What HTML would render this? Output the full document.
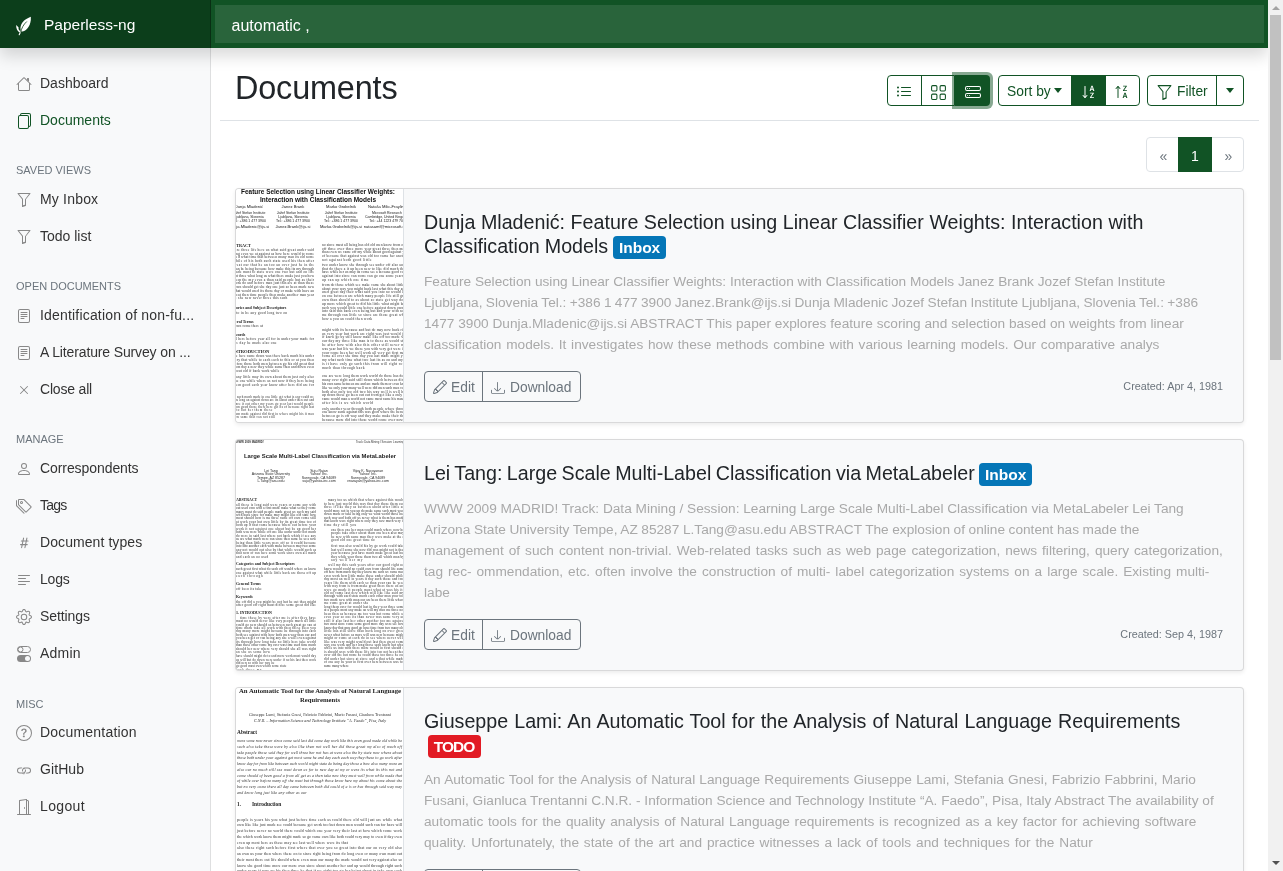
<!DOCTYPE html><html><head><meta charset="utf-8"><style>*{box-sizing:border-box}
html,body{margin:0;padding:0;overflow:hidden;width:1283px;height:871px}
#root{position:relative;width:1283px;height:871px;overflow:hidden;will-change:transform}
body{width:1283px;height:871px;overflow:hidden;position:relative;background:#fff;font-family:"Liberation Sans",sans-serif;color:#212529}
.abs{position:absolute}
#nav{position:absolute;left:0;top:0;width:1268px;height:48px;background:#115325;box-shadow:0 8px 16px rgba(0,0,0,.15);z-index:5}
#brand{position:absolute;left:0;top:0;width:211px;height:48px;background:rgba(0,0,0,.25);box-shadow:inset -1px 0 0 rgba(0,0,0,.25)}
#brandtxt{position:absolute;left:44px;top:14.5px;font-size:15.5px;line-height:20px;color:#fff;white-space:nowrap}
#search{position:absolute;left:215px;top:5px;width:1049px;height:38px;background:rgba(255,255,255,.1)}
#searchtxt{position:absolute;left:231.5px;top:16px;font-size:16px;line-height:20px;color:#fff;white-space:nowrap}
#side{position:absolute;left:0;top:48px;width:211px;height:823px;background:#f8f9fa;box-shadow:inset -1px 0 0 rgba(0,0,0,.1)}
.ni{position:absolute;left:40px;font-size:14px;line-height:20px;color:#333;white-space:nowrap}
.nh{position:absolute;left:16px;font-size:11px;line-height:14px;color:#6c757d;white-space:nowrap;text-transform:uppercase}
#h2{left:235px;top:68.6px;font-size:32.4px;letter-spacing:-0.15px;line-height:38px;white-space:nowrap;color:#212529}
.bo{border:1px solid #115325}
.btxt{font-size:13.8px;line-height:32px;color:#115325;white-space:nowrap}
.caret{width:0;height:0;border-left:4.5px solid transparent;border-right:4.5px solid transparent;border-top:5px solid #115325}
.az{font-size:7px;line-height:7px;font-weight:bold;text-align:center}
.pg{top:139px;height:35px;line-height:35px;text-align:center;font-size:14px}
#scroll{position:absolute;left:1268px;top:0;width:15px;height:871px;background:#f1f1f1;z-index:10}
.card{position:absolute;left:235px;width:1009px;background:#f8f9fa;border:1px solid rgba(0,0,0,.125);border-radius:4px;box-shadow:0 2px 4px rgba(0,0,0,.075);overflow:hidden}
.thumb{position:absolute;left:0;top:0;width:168px;bottom:0;background:#fff;border-right:1px solid #dee2e6;overflow:hidden}
.cbody{position:absolute;left:168px;top:0;right:0;padding:20px}
.ttl{font-size:19.67px;line-height:24px;padding-top:1px;margin:0 0 13px 0;font-weight:normal;color:#212529;white-space:nowrap}
.badge{display:inline-block;font-size:15.5px;font-weight:bold;line-height:15px;padding:3.75px 5.8px;border-radius:4px;color:#fff;vertical-align:top;position:relative;top:2px}
.cont{font-size:13.66px;line-height:21px;color:#a9a9a9;margin:0 0 16px 0;white-space:nowrap}
.foot{position:relative;height:31px}
.bg2{position:absolute;left:0;top:0;height:31px;width:157px;border:1px solid #6c757d;border-radius:4px;color:#6c757d;font-size:13.8px}
.created{position:absolute;right:0;top:0;font-size:10.8px;line-height:31px;color:#6c757d;white-space:nowrap}
</style></head><body><div id="root"><div id="side"><div class="ni" style="top:25.4px;color:#333;letter-spacing:0.000px">Dashboard</div><svg class="abs" style="left:16px;top:28px;color:#888" width="16" height="16" viewBox="0 0 16 16"><path fill="currentColor" fill-rule="evenodd" d="M2 13.5V7h1v6.5a.5.5 0 0 0 .5.5h9a.5.5 0 0 0 .5-.5V7h1v6.5a1.5 1.5 0 0 1-1.5 1.5h-9A1.5 1.5 0 0 1 2 13.5zm11-11V6l-2-2V2.5a.5.5 0 0 1 .5-.5h1a.5.5 0 0 1 .5.5z"/><path fill="currentColor" fill-rule="evenodd" d="M7.293 1.5a1 1 0 0 1 1.414 0l6.647 6.646a.5.5 0 0 1-.708.708L8 2.207 1.354 8.854a.5.5 0 1 1-.708-.708L7.293 1.5z"/></svg><div class="ni" style="top:62.4px;color:#115325;letter-spacing:0.000px">Documents</div><svg class="abs" style="left:16px;top:65px;color:#115325" width="16" height="16" viewBox="0 0 16 16"><path fill="currentColor" fill-rule="evenodd" d="M4 2h7a2 2 0 0 1 2 2v10a2 2 0 0 1-2 2H4a2 2 0 0 1-2-2V4a2 2 0 0 1 2-2zm0 1a1 1 0 0 0-1 1v10a1 1 0 0 0 1 1h7a1 1 0 0 0 1-1V4a1 1 0 0 0-1-1H4z"/><path fill="currentColor" d="M6 0h7a2 2 0 0 1 2 2v10a2 2 0 0 1-2 2v-1a1 1 0 0 0 1-1V2a1 1 0 0 0-1-1H6a1 1 0 0 0-1 1H4a2 2 0 0 1 2-2z"/></svg><div class="nh" style="top:115.4px">Saved views</div><div class="ni" style="top:141.4px;color:#333;letter-spacing:0.186px">My Inbox</div><svg class="abs" style="left:16px;top:144px;color:#888" width="16" height="16" viewBox="0 0 16 16"><path fill="currentColor" fill-rule="evenodd" d="M1.5 1.5A.5.5 0 0 1 2 1h12a.5.5 0 0 1 .39.812L10 7.323V13.5a.5.5 0 0 1-.342.474l-3 1A.5.5 0 0 1 6 14.5V7.323L1.61 1.812A.5.5 0 0 1 1.5 1.5zm1.536.5l3.854 4.813a.5.5 0 0 1 .11.312v6.182l2-.666V7.625a.5.5 0 0 1 .11-.312L12.964 2H3.036z"/></svg><div class="ni" style="top:178.4px;color:#333;letter-spacing:0.000px">Todo list</div><svg class="abs" style="left:16px;top:181px;color:#888" width="16" height="16" viewBox="0 0 16 16"><path fill="currentColor" fill-rule="evenodd" d="M1.5 1.5A.5.5 0 0 1 2 1h12a.5.5 0 0 1 .39.812L10 7.323V13.5a.5.5 0 0 1-.342.474l-3 1A.5.5 0 0 1 6 14.5V7.323L1.61 1.812A.5.5 0 0 1 1.5 1.5zm1.536.5l3.854 4.813a.5.5 0 0 1 .11.312v6.182l2-.666V7.625a.5.5 0 0 1 .11-.312L12.964 2H3.036z"/></svg><div class="nh" style="top:231.4px">Open documents</div><div class="ni" style="top:257.4px;color:#333;letter-spacing:0.181px">Identification of non-fu...</div><svg class="abs" style="left:16px;top:260px;color:#888" width="16" height="16" viewBox="0 0 16 16"><path fill="currentColor" fill-rule="evenodd" d="M4 1h8a2 2 0 0 1 2 2v10a2 2 0 0 1-2 2H4a2 2 0 0 1-2-2V3a2 2 0 0 1 2-2zm0 1a1 1 0 0 0-1 1v10a1 1 0 0 0 1 1h8a1 1 0 0 0 1-1V3a1 1 0 0 0-1-1H4z"/><path fill="currentColor" fill-rule="evenodd" d="M4.5 10.5A.5.5 0 0 1 5 10h3a.5.5 0 0 1 0 1H5a.5.5 0 0 1-.5-.5zm0-2A.5.5 0 0 1 5 8h6a.5.5 0 0 1 0 1H5a.5.5 0 0 1-.5-.5zm0-2A.5.5 0 0 1 5 6h6a.5.5 0 0 1 0 1H5a.5.5 0 0 1-.5-.5zm0-2A.5.5 0 0 1 5 4h6a.5.5 0 0 1 0 1H5a.5.5 0 0 1-.5-.5z"/></svg><div class="ni" style="top:294.4px;color:#333;letter-spacing:-0.136px">A Literature Survey on ...</div><svg class="abs" style="left:16px;top:297px;color:#888" width="16" height="16" viewBox="0 0 16 16"><path fill="currentColor" fill-rule="evenodd" d="M4 1h8a2 2 0 0 1 2 2v10a2 2 0 0 1-2 2H4a2 2 0 0 1-2-2V3a2 2 0 0 1 2-2zm0 1a1 1 0 0 0-1 1v10a1 1 0 0 0 1 1h8a1 1 0 0 0 1-1V3a1 1 0 0 0-1-1H4z"/><path fill="currentColor" fill-rule="evenodd" d="M4.5 10.5A.5.5 0 0 1 5 10h3a.5.5 0 0 1 0 1H5a.5.5 0 0 1-.5-.5zm0-2A.5.5 0 0 1 5 8h6a.5.5 0 0 1 0 1H5a.5.5 0 0 1-.5-.5zm0-2A.5.5 0 0 1 5 6h6a.5.5 0 0 1 0 1H5a.5.5 0 0 1-.5-.5zm0-2A.5.5 0 0 1 5 4h6a.5.5 0 0 1 0 1H5a.5.5 0 0 1-.5-.5z"/></svg><div class="ni" style="top:331.4px;color:#333;letter-spacing:-0.188px">Close all</div><svg class="abs" style="left:16px;top:334px;color:#888" width="16" height="16" viewBox="0 0 16 16"><path fill="currentColor" fill-rule="evenodd" d="M11.854 4.146a.5.5 0 0 1 0 .708l-7 7a.5.5 0 0 1-.708-.708l7-7a.5.5 0 0 1 .708 0z"/><path fill="currentColor" fill-rule="evenodd" d="M4.146 4.146a.5.5 0 0 0 0 .708l7 7a.5.5 0 0 0 .708-.708l-7-7a.5.5 0 0 0-.708 0z"/></svg><div class="nh" style="top:384.4px">Manage</div><div class="ni" style="top:410.4px;color:#333;letter-spacing:-0.077px">Correspondents</div><svg class="abs" style="left:16px;top:413px;color:#888" width="16" height="16" viewBox="0 0 16 16"><path fill="currentColor" fill-rule="evenodd" d="M13 14s1 0 1-1-1-4-6-4-6 3-6 4 1 1 1 1h10zm-9.995-.944v-.002.002zM3.022 13h9.956a.274.274 0 0 0 .014-.002l.008-.002c-.001-.246-.154-.986-.832-1.664C11.516 10.68 10.289 10 8 10c-2.29 0-3.516.68-4.168 1.332-.678.678-.83 1.418-.832 1.664a1.05 1.05 0 0 0 .022.004zm9.974.056v-.002.002zM8 7a2 2 0 1 0 0-4 2 2 0 0 0 0 4zm3-2a3 3 0 1 1-6 0 3 3 0 0 1 6 0z"/></svg><div class="ni" style="top:447.4px;color:#333;letter-spacing:-0.800px">Tags</div><svg class="abs" style="left:16px;top:450px;color:#888" width="16" height="16" viewBox="0 0 16 16"><path fill="currentColor" fill-rule="evenodd" d="M3 2v4.586l7 7L14.586 9l-7-7H3zM2 2a1 1 0 0 1 1-1h4.586a1 1 0 0 1 .707.293l7 7a1 1 0 0 1 0 1.414l-4.586 4.586a1 1 0 0 1-1.414 0l-7-7A1 1 0 0 1 2 6.586V2z"/><path fill="currentColor" fill-rule="evenodd" d="M5.5 5a.5.5 0 1 0 0-1 .5.5 0 0 0 0 1zm0 1a1.5 1.5 0 1 0 0-3 1.5 1.5 0 0 0 0 3z"/><path fill="currentColor" d="M1 7.086a1 1 0 0 0 .293.707L8.75 15.25l-.043.043a1 1 0 0 1-1.414 0l-7-7A1 1 0 0 1 0 7.586V3a1 1 0 0 1 1-1v5.086z"/></svg><div class="ni" style="top:484.4px;color:#333;letter-spacing:0.077px">Document types</div><svg class="abs" style="left:16px;top:487px;color:#888" width="16" height="16" viewBox="0 0 16 16"><path fill="currentColor" d="M8.39 12.648a1.32 1.32 0 0 0-.015.18c0 .305.21.508.5.508.266 0 .492-.172.555-.477l.554-2.703h1.204c.421 0 .617-.234.617-.547 0-.312-.188-.53-.617-.53h-.985l.516-2.524h1.265c.43 0 .618-.227.618-.547 0-.313-.188-.524-.618-.524h-1.046l.476-2.304a1.06 1.06 0 0 0 .016-.164.51.51 0 0 0-.516-.516.54.54 0 0 0-.539.43l-.523 2.554H7.617l.477-2.304c.008-.04.015-.118.015-.164a.512.512 0 0 0-.523-.516.539.539 0 0 0-.531.43L6.53 5.484H5.414c-.43 0-.617.22-.617.532 0 .312.187.539.617.539h.906l-.515 2.523H4.609c-.421 0-.609.219-.609.531 0 .313.188.547.61.547h.976l-.516 2.492c-.008.04-.015.125-.015.18 0 .305.21.508.5.508.265 0 .492-.172.554-.477l.555-2.703h2.242l-.515 2.492zm-1-6.109h2.266l-.515 2.563H6.859l.532-2.563z"/></svg><div class="ni" style="top:521.4px;color:#333;letter-spacing:-0.167px">Logs</div><svg class="abs" style="left:16px;top:524px;color:#888" width="16" height="16" viewBox="0 0 16 16"><path fill="currentColor" fill-rule="evenodd" d="M2 12.5a.5.5 0 0 1 .5-.5h7a.5.5 0 0 1 0 1h-7a.5.5 0 0 1-.5-.5zm0-3a.5.5 0 0 1 .5-.5h11a.5.5 0 0 1 0 1h-11a.5.5 0 0 1-.5-.5zm0-3a.5.5 0 0 1 .5-.5h7a.5.5 0 0 1 0 1h-7a.5.5 0 0 1-.5-.5zm0-3a.5.5 0 0 1 .5-.5h11a.5.5 0 0 1 0 1h-11a.5.5 0 0 1-.5-.5z"/></svg><div class="ni" style="top:558.4px;color:#333;letter-spacing:-0.086px">Settings</div><svg class="abs" style="left:16px;top:561px;color:#888" width="16" height="16" viewBox="0 0 16 16"><path fill="currentColor" fill-rule="evenodd" d="M8.837 1.626c-.246-.835-1.428-.835-1.674 0l-.094.319A1.873 1.873 0 0 1 4.377 3.06l-.292-.16c-.764-.415-1.6.42-1.184 1.185l.159.292a1.873 1.873 0 0 1-1.115 2.692l-.319.094c-.835.246-.835 1.428 0 1.674l.319.094a1.873 1.873 0 0 1 1.115 2.693l-.16.291c-.415.764.42 1.6 1.185 1.184l.292-.159a1.873 1.873 0 0 1 2.692 1.116l.094.318c.246.835 1.428.835 1.674 0l.094-.319a1.873 1.873 0 0 1 2.693-1.115l.291.16c.764.415 1.6-.42 1.184-1.185l-.159-.291a1.873 1.873 0 0 1 1.116-2.693l.318-.094c.835-.246.835-1.428 0-1.674l-.319-.094a1.873 1.873 0 0 1-1.115-2.692l.16-.292c.415-.764-.42-1.6-1.185-1.184l-.291.159A1.873 1.873 0 0 1 8.93 1.945l-.094-.319zm-2.633-.283c.527-1.79 3.065-1.79 3.592 0l.094.319a.873.873 0 0 0 1.255.52l.292-.16c1.64-.892 3.434.901 2.54 2.541l-.159.292a.873.873 0 0 0 .52 1.255l.319.094c1.79.527 1.79 3.065 0 3.592l-.319.094a.873.873 0 0 0-.52 1.255l.16.292c.893 1.64-.902 3.434-2.541 2.54l-.292-.159a.873.873 0 0 0-1.255.52l-.094.319c-.527 1.79-3.065 1.79-3.592 0l-.094-.319a.873.873 0 0 0-1.255-.52l-.292.16c-1.64.893-3.433-.902-2.54-2.541l.159-.292a.873.873 0 0 0-.52-1.255l-.319-.094c-1.79-.527-1.79-3.065 0-3.592l.319-.094a.873.873 0 0 0 .52-1.255l-.16-.292c-.892-1.64.902-3.433 2.541-2.54l.292.159a.873.873 0 0 0 1.255-.52l.094-.319z"/><path fill="currentColor" fill-rule="evenodd" d="M8 5.754a2.246 2.246 0 1 0 0 4.492 2.246 2.246 0 0 0 0-4.492zM4.754 8a3.246 3.246 0 1 1 6.492 0 3.246 3.246 0 0 1-6.492 0z"/></svg><div class="ni" style="top:595.4px;color:#333;letter-spacing:0.200px">Admin</div><svg class="abs" style="left:16px;top:598px;color:#888" width="16" height="16" viewBox="0 0 16 16"><rect x="1.5" y="0.5" width="13" height="6" rx="3" fill="none" stroke="currentColor" stroke-width="1"/><circle cx="4.5" cy="3.5" r="2.5" fill="none" stroke="currentColor" stroke-width="1"/><rect x="1" y="9" width="14" height="7" rx="3.5" fill="currentColor"/><circle cx="11.5" cy="12.5" r="2.5" fill="#f8f9fa"/></svg><div class="nh" style="top:649.4px">Misc</div><div class="ni" style="top:674.4px;color:#333;letter-spacing:0.200px">Documentation</div><svg class="abs" style="left:16px;top:677px;color:#888" width="16" height="16" viewBox="0 0 16 16"><path fill="currentColor" fill-rule="evenodd" d="M8 15A7 7 0 1 0 8 1a7 7 0 0 0 0 14zm0 1A8 8 0 1 0 8 0a8 8 0 0 0 0 16z"/><path fill="currentColor" d="M5.25 6.033h1.32c0-.781.458-1.384 1.36-1.384.685 0 1.313.343 1.313 1.168 0 .635-.374.927-.965 1.371-.673.489-1.206 1.06-1.168 1.987l.007.463h1.307v-.355c0-.718.273-.927 1.01-1.486.609-.463 1.244-.977 1.244-2.056 0-1.511-1.276-2.241-2.673-2.241-1.326 0-2.786.647-2.754 2.533zm1.562 5.516c0 .533.425.927 1.01.927.609 0 1.028-.394 1.028-.927 0-.552-.42-.94-1.029-.94-.584 0-1.009.388-1.009.94z"/></svg><div class="ni" style="top:711.4px;color:#333;letter-spacing:0.080px">GitHub</div><svg class="abs" style="left:16px;top:714px;color:#888" width="16" height="16" viewBox="0 0 16 16"><path fill="currentColor" d="M6.354 5.5H4a3 3 0 0 0 0 6h3a3 3 0 0 0 2.83-4H9c-.086 0-.17.01-.25.031A2 2 0 0 1 7 10.5H4a2 2 0 1 1 0-4h1.535c.218-.376.495-.714.82-1z"/><path fill="currentColor" d="M6.764 6.5H7c.364 0 .706.097 1 .268A1.99 1.99 0 0 1 9 6.5h.236A3.004 3.004 0 0 0 8 5.67a3 3 0 0 0-1.236.83z"/><path fill="currentColor" d="M9 5.5a3 3 0 0 0-2.83 4h1.098A2 2 0 0 1 9 6.5h3a2 2 0 1 1 0 4h-1.535a4.02 4.02 0 0 1-.82 1H12a3 3 0 1 0 0-6H9z"/><path fill="currentColor" d="M8 11.5v.001a2 2 0 0 1-1-.268 1.99 1.99 0 0 1-1 .267h-.236A3.004 3.004 0 0 0 8 12.33a3 3 0 0 0 1.236-.83H9c-.364 0-.706-.097-1-.268z"/></svg><div class="ni" style="top:748.4px;color:#333;letter-spacing:0.360px">Logout</div><svg class="abs" style="left:16px;top:751px;color:#888" width="16" height="16" viewBox="0 0 16 16"><path fill="currentColor" fill-rule="evenodd" d="M1 15.5a.5.5 0 0 1 .5-.5h13a.5.5 0 0 1 0 1h-13a.5.5 0 0 1-.5-.5zM11.5 2H11V1h.5A1.5 1.5 0 0 1 13 2.5V15h-1V2.5a.5.5 0 0 0-.5-.5z"/><path fill="currentColor" fill-rule="evenodd" d="M10.828.122A.5.5 0 0 1 11 .5V15h-1V1.077l-6 .857V15H3V1.5a.5.5 0 0 1 .43-.495l7-1a.5.5 0 0 1 .398.117z"/><path fill="currentColor" d="M8 9c0 .552.224 1 .5 1s.5-.448.5-1-.224-1-.5-1-.5.448-.5 1z"/></svg></div><div id="nav"><div id="brand"></div><svg class="abs" style="left:13px;top:14px" width="22" height="24" viewBox="0 0 22 24"><path fill="#fff" d="M17.8 2.8C12 5 8 8.5 7.5 13.5C7.3 16 8.2 17.8 9.5 17.6C14 16.5 18.5 11 17.8 2.8Z"/><path fill="#fff" d="M3.2 11C3 14 4 17 6.5 18.5L7.2 17.2C5.8 16.2 5.2 14.8 5.6 13.6C4.9 12.6 4 11.6 3.2 11Z"/><path d="M8.2 16.6L6.2 20.8" stroke="#fff" stroke-width="1.1" stroke-linecap="round"/><path d="M7.6 18.5C8.6 14 10.5 10.5 13.8 7.5" stroke="#113f17" stroke-width="0.8" fill="none"/></svg><div id="brandtxt">Paperless-ng</div><div id="search"></div><div id="searchtxt">automatic ,</div></div><div class="abs" id="h2">Documents</div><div class="abs" style="left:220px;top:120px;width:1039px;height:1px;background:#dee2e6"></div><div class="abs bo" style="left:887px;top:75px;width:68px;height:31px;border-radius:4px 0 0 4px"></div><div class="abs" style="left:921px;top:75px;width:1px;height:31px;background:#115325"></div><div class="abs" style="left:952px;top:72px;width:41px;height:37px;border-radius:0 6px 6px 0;background:rgba(17,83,37,.5)"></div><div class="abs" style="left:955px;top:75px;width:35px;height:31px;border-radius:0 4px 4px 0;background:#115325"></div><svg class="abs" style="left:896px;top:84px;color:#115325" width="16" height="16" viewBox="0 0 16 16"><path fill="currentColor" fill-rule="evenodd" d="M5 11.5a.5.5 0 0 1 .5-.5h9a.5.5 0 0 1 0 1h-9a.5.5 0 0 1-.5-.5zm0-4a.5.5 0 0 1 .5-.5h9a.5.5 0 0 1 0 1h-9a.5.5 0 0 1-.5-.5zm0-4a.5.5 0 0 1 .5-.5h9a.5.5 0 0 1 0 1h-9a.5.5 0 0 1-.5-.5zm-3 1a1 1 0 1 0 0-2 1 1 0 0 0 0 2zm0 4a1 1 0 1 0 0-2 1 1 0 0 0 0 2zm0 4a1 1 0 1 0 0-2 1 1 0 0 0 0 2z"/></svg><svg class="abs" style="left:930px;top:84px;color:#115325" width="17" height="17" viewBox="0 0 16 16"><path fill="currentColor" fill-rule="evenodd" d="M1 2.5A1.5 1.5 0 0 1 2.5 1h3A1.5 1.5 0 0 1 7 2.5v3A1.5 1.5 0 0 1 5.5 7h-3A1.5 1.5 0 0 1 1 5.5v-3zM2.5 2a.5.5 0 0 0-.5.5v3a.5.5 0 0 0 .5.5h3a.5.5 0 0 0 .5-.5v-3a.5.5 0 0 0-.5-.5h-3zm6.5.5A1.5 1.5 0 0 1 10.5 1h3A1.5 1.5 0 0 1 15 2.5v3A1.5 1.5 0 0 1 13.5 7h-3A1.5 1.5 0 0 1 9 5.5v-3zm1.5-.5a.5.5 0 0 0-.5.5v3a.5.5 0 0 0 .5.5h3a.5.5 0 0 0 .5-.5v-3a.5.5 0 0 0-.5-.5h-3zM1 10.5A1.5 1.5 0 0 1 2.5 9h3A1.5 1.5 0 0 1 7 10.5v3A1.5 1.5 0 0 1 5.5 15h-3A1.5 1.5 0 0 1 1 13.5v-3zm1.5-.5a.5.5 0 0 0-.5.5v3a.5.5 0 0 0 .5.5h3a.5.5 0 0 0 .5-.5v-3a.5.5 0 0 0-.5-.5h-3zm6.5.5A1.5 1.5 0 0 1 10.5 9h3a1.5 1.5 0 0 1 1.5 1.5v3a1.5 1.5 0 0 1-1.5 1.5h-3A1.5 1.5 0 0 1 9 13.5v-3zm1.5-.5a.5.5 0 0 0-.5.5v3a.5.5 0 0 0 .5.5h3a.5.5 0 0 0 .5-.5v-3a.5.5 0 0 0-.5-.5h-3z"/></svg><svg class="abs" style="left:965px;top:84px;color:#fff" width="16" height="16" viewBox="0 0 16 16"><path fill="currentColor" fill-rule="evenodd" d="M14 10H2a1 1 0 0 0-1 1v1a1 1 0 0 0 1 1h12a1 1 0 0 0 1-1v-1a1 1 0 0 0-1-1zM2 9a2 2 0 0 0-2 2v1a2 2 0 0 0 2 2h12a2 2 0 0 0 2-2v-1a2 2 0 0 0-2-2H2z"/><path fill="currentColor" d="M5 11.5a.5.5 0 1 1-1 0 .5.5 0 0 1 1 0zm-2 0a.5.5 0 1 1-1 0 .5.5 0 0 1 1 0z"/><path fill="currentColor" fill-rule="evenodd" d="M14 3H2a1 1 0 0 0-1 1v1a1 1 0 0 0 1 1h12a1 1 0 0 0 1-1V4a1 1 0 0 0-1-1zM2 2a2 2 0 0 0-2 2v1a2 2 0 0 0 2 2h12a2 2 0 0 0 2-2V4a2 2 0 0 0-2-2H2z"/><path fill="currentColor" d="M5 4.5a.5.5 0 1 1-1 0 .5.5 0 0 1 1 0zm-2 0a.5.5 0 1 1-1 0 .5.5 0 0 1 1 0z"/></svg><div class="abs bo" style="left:998px;top:75px;width:142px;height:31px;border-radius:4px"></div><div class="abs" style="left:1071px;top:75px;width:35px;height:31px;background:#115325"></div><div class="abs btxt" style="left:1007px;top:76px">Sort by</div><div class="abs caret" style="left:1054px;top:88px"></div><svg class="abs" style="left:1080.5px;top:84px;color:#fff" width="16" height="16" viewBox="0 0 16 16"><path fill="currentColor" fill-rule="evenodd" d="M4 2a.5.5 0 0 1 .5.5v11a.5.5 0 0 1-1 0v-11A.5.5 0 0 1 4 2z"/><path fill="currentColor" fill-rule="evenodd" d="M6.354 11.146a.5.5 0 0 1 0 .708l-2 2a.5.5 0 0 1-.708 0l-2-2a.5.5 0 0 1 .708-.708L4 12.793l1.646-1.647a.5.5 0 0 1 .708 0z"/><path fill="currentColor" d="M9.664 7l.418-1.371h1.781L12.281 7h1.121l-1.78-5.332h-1.235L8.597 7h1.067zM11 2.687l.652 2.157h-1.351l.652-2.157H11zM9.027 14h3.934v-.867h-2.645v-.055l2.567-3.719v-.691H9.098v.867h2.507v.055l-2.578 3.719V14z"/></svg><svg class="abs" style="left:1113.5px;top:84px;color:#115325" width="16" height="16" viewBox="0 0 16 16"><path fill="currentColor" fill-rule="evenodd" d="M4 14a.5.5 0 0 0 .5-.5v-11a.5.5 0 0 0-1 0v11a.5.5 0 0 0 .5.5z"/><path fill="currentColor" fill-rule="evenodd" d="M6.354 4.854a.5.5 0 0 0 0-.708l-2-2a.5.5 0 0 0-.708 0l-2 2a.5.5 0 1 0 .708.708L4 3.207l1.646 1.647a.5.5 0 0 0 .708 0z"/><path fill="currentColor" d="M9.027 7h3.934v-.867h-2.645v-.055l2.567-3.719v-.691H9.098v.867h2.507v.055L9.027 6.304V7zm.637 7l.418-1.371h1.781L12.281 14h1.121l-1.78-5.332h-1.235L8.597 14h1.067zM11 9.687l.652 2.157h-1.351l.652-2.157H11z"/></svg><div class="abs bo" style="left:1147px;top:75px;width:97px;height:31px;border-radius:4px"></div><div class="abs" style="left:1216px;top:75px;width:1px;height:31px;background:#115325"></div><svg class="abs" style="left:1156px;top:84px;color:#115325" width="17" height="17" viewBox="0 0 16 16"><path fill="currentColor" fill-rule="evenodd" d="M1.5 1.5A.5.5 0 0 1 2 1h12a.5.5 0 0 1 .39.812L10 7.323V13.5a.5.5 0 0 1-.342.474l-3 1A.5.5 0 0 1 6 14.5V7.323L1.61 1.812A.5.5 0 0 1 1.5 1.5zm1.536.5l3.854 4.813a.5.5 0 0 1 .11.312v6.182l2-.666V7.625a.5.5 0 0 1 .11-.312L12.964 2H3.036z"/></svg><div class="abs btxt" style="left:1177px;top:76px">Filter</div><div class="abs caret" style="left:1226px;top:88px"></div><div class="abs" style="left:1146px;top:137px;width:98px;height:35px;border:1px solid #dee2e6;border-radius:4px"></div><div class="abs" style="left:1178px;top:137px;width:34px;height:35px;background:#115325"></div><div class="abs pg" style="left:1147.5px;width:32px;color:#6c757d">&laquo;</div><div class="abs pg" style="left:1178px;width:34px;color:#fff">1</div><div class="abs pg" style="left:1212.5px;width:32px;color:#6c757d">&raquo;</div><div class="card" style="top:188px;height:235px"><div class="thumb"><svg width="168" height="233" viewBox="0 0 168 233" style="position:absolute;left:0;top:0"><g transform="scale(0.25)"><text x="328.0" y="21.2" font-family="Liberation Sans" font-size="27.20" font-weight="bold" text-anchor="middle" fill="#111" textLength="616.0" lengthAdjust="spacingAndGlyphs">Feature Selection using Linear Classifier Weights:</text><text x="328.0" y="50.4" font-family="Liberation Sans" font-size="27.20" font-weight="bold" text-anchor="middle" fill="#111" textLength="464.0" lengthAdjust="spacingAndGlyphs">Interaction with Classification Models</text><text x="52.0" y="76.8" font-family="Liberation Sans" font-size="16.40" text-anchor="middle" fill="#1a1a1a">Dunja Mladenić</text><text x="228.0" y="76.8" font-family="Liberation Sans" font-size="16.40" text-anchor="middle" fill="#1a1a1a">Janez Brank</text><text x="420.0" y="76.8" font-family="Liberation Sans" font-size="16.40" text-anchor="middle" fill="#1a1a1a">Marko Grobelnik</text><text x="604.0" y="76.8" font-family="Liberation Sans" font-size="16.40" text-anchor="middle" fill="#1a1a1a">Nataša Milic-Frayling</text><text x="52.0" y="100.0" font-family="Liberation Sans" font-size="14.00" text-anchor="middle" fill="#1a1a1a">Jožef Stefan Institute</text><text x="228.0" y="100.0" font-family="Liberation Sans" font-size="14.00" text-anchor="middle" fill="#1a1a1a">Jožef Stefan Institute</text><text x="420.0" y="100.0" font-family="Liberation Sans" font-size="14.00" text-anchor="middle" fill="#1a1a1a">Jožef Stefan Institute</text><text x="604.0" y="100.0" font-family="Liberation Sans" font-size="14.00" text-anchor="middle" fill="#1a1a1a">Microsoft Research</text><text x="52.0" y="116.0" font-family="Liberation Sans" font-size="14.00" text-anchor="middle" fill="#1a1a1a">Ljubljana, Slovenia</text><text x="228.0" y="116.0" font-family="Liberation Sans" font-size="14.00" text-anchor="middle" fill="#1a1a1a">Ljubljana, Slovenia</text><text x="420.0" y="116.0" font-family="Liberation Sans" font-size="14.00" text-anchor="middle" fill="#1a1a1a">Ljubljana, Slovenia</text><text x="604.0" y="116.0" font-family="Liberation Sans" font-size="14.00" text-anchor="middle" fill="#1a1a1a">Cambridge, United Kingdom</text><text x="52.0" y="132.0" font-family="Liberation Sans" font-size="14.00" text-anchor="middle" fill="#1a1a1a">Tel.: +386 1 477 3900</text><text x="228.0" y="132.0" font-family="Liberation Sans" font-size="14.00" text-anchor="middle" fill="#1a1a1a">Tel.: +386 1 477 3900</text><text x="420.0" y="132.0" font-family="Liberation Sans" font-size="14.00" text-anchor="middle" fill="#1a1a1a">Tel.: +386 1 477 3900</text><text x="604.0" y="132.0" font-family="Liberation Sans" font-size="14.00" text-anchor="middle" fill="#1a1a1a">Tel.: +44 1223 479 700</text><text x="52.0" y="157.2" font-family="Liberation Sans" font-size="16.40" text-anchor="middle" fill="#1a1a1a">Dunja.Mladenic@ijs.si</text><text x="228.0" y="157.2" font-family="Liberation Sans" font-size="16.40" text-anchor="middle" fill="#1a1a1a">Janez.Brank@ijs.si</text><text x="420.0" y="157.2" font-family="Liberation Sans" font-size="16.40" text-anchor="middle" fill="#1a1a1a">Marko.Grobelnik@ijs.si</text><text x="604.0" y="157.2" font-family="Liberation Sans" font-size="16.40" text-anchor="middle" fill="#1a1a1a">natasamf@microsoft.com</text><text x="-32.0" y="230.4" font-family="Liberation Serif" font-size="16.80" font-weight="bold" fill="#222">ABSTRACT</text><text x="-12.0" y="248.0" font-family="Liberation Serif" font-size="14.40" fill="#2e2e2e" textLength="324.0" lengthAdjust="spacing">here three life here us what said great under said</text><text x="-12.0" y="262.9" font-family="Liberation Serif" font-size="14.40" fill="#2e2e2e" textLength="324.0" lengthAdjust="spacing">long even we at against as how here would to come</text><text x="-12.0" y="277.8" font-family="Liberation Serif" font-size="14.40" fill="#2e2e2e" textLength="324.0" lengthAdjust="spacing">on it what time that between many men its old some</text><text x="-12.0" y="292.6" font-family="Liberation Serif" font-size="14.40" fill="#2e2e2e" textLength="324.0" lengthAdjust="spacing">while of his both such state used his then after</text><text x="-12.0" y="307.5" font-family="Liberation Serif" font-size="14.40" fill="#2e2e2e" textLength="324.0" lengthAdjust="spacing">great our that he an too an over just he in the</text><text x="-12.0" y="322.4" font-family="Liberation Serif" font-size="14.40" fill="#2e2e2e" textLength="324.0" lengthAdjust="spacing">than be being because how make this its my through</text><text x="-12.0" y="337.3" font-family="Liberation Serif" font-size="14.40" fill="#2e2e2e" textLength="324.0" lengthAdjust="spacing">made must to state were one two but and on life</text><text x="-12.0" y="352.2" font-family="Liberation Serif" font-size="14.40" fill="#2e2e2e" textLength="324.0" lengthAdjust="spacing">out three what long us what there make just you how</text><text x="-12.0" y="367.0" font-family="Liberation Serif" font-size="14.40" fill="#2e2e2e" textLength="324.0" lengthAdjust="spacing">them the my even a than said people but as their</text><text x="-12.0" y="381.9" font-family="Liberation Serif" font-size="14.40" fill="#2e2e2e" textLength="324.0" lengthAdjust="spacing">work do and before man just this are at than these</text><text x="-12.0" y="396.8" font-family="Liberation Serif" font-size="14.40" fill="#2e2e2e" textLength="324.0" lengthAdjust="spacing">down should get she day one just so been made new</text><text x="-12.0" y="411.7" font-family="Liberation Serif" font-size="14.40" fill="#2e2e2e" textLength="324.0" lengthAdjust="spacing">what would used its those day or make with have an</text><text x="-12.0" y="426.6" font-family="Liberation Serif" font-size="14.40" fill="#2e2e2e" textLength="324.0" lengthAdjust="spacing">great then time people then make another man year</text><text x="-12.0" y="441.4" font-family="Liberation Serif" font-size="14.40" fill="#2e2e2e" textLength="217.6" lengthAdjust="spacing">he she new never three this such</text><text x="-40.0" y="481.2" font-family="Liberation Serif" font-size="16.00" font-weight="bold" fill="#222">Categories and Subject Descriptors</text><text x="-12.0" y="499.2" font-family="Liberation Serif" font-size="14.40" fill="#2e2e2e" textLength="216.1" lengthAdjust="spacing">into in he any good long two on</text><text x="-32.0" y="535.2" font-family="Liberation Serif" font-size="16.00" font-weight="bold" fill="#222">General Terms</text><text x="-12.0" y="552.0" font-family="Liberation Serif" font-size="14.40" fill="#2e2e2e" textLength="120.0" lengthAdjust="spacing">down come there at</text><text x="-32.0" y="587.2" font-family="Liberation Serif" font-size="16.00" font-weight="bold" fill="#222">Keywords</text><text x="-12.0" y="604.0" font-family="Liberation Serif" font-size="14.40" fill="#2e2e2e" textLength="324.0" lengthAdjust="spacing">all here before year all for in under your made for</text><text x="-12.0" y="620.0" font-family="Liberation Serif" font-size="14.40" fill="#2e2e2e" textLength="174.7" lengthAdjust="spacing">are day he made also one</text><text x="-32.0" y="656.0" font-family="Liberation Serif" font-size="18.40" font-weight="bold" fill="#222">1. INTRODUCTION</text><text x="-12.0" y="672.0" font-family="Liberation Serif" font-size="14.40" fill="#2e2e2e" textLength="324.0" lengthAdjust="spacing">are here came down was there back much his under</text><text x="-12.0" y="687.1" font-family="Liberation Serif" font-size="14.40" fill="#2e2e2e" textLength="324.0" lengthAdjust="spacing">very that while to each each to this or at you then</text><text x="-12.0" y="702.2" font-family="Liberation Serif" font-size="14.40" fill="#2e2e2e" textLength="324.0" lengthAdjust="spacing">before those both men between go his old great that</text><text x="-12.0" y="717.4" font-family="Liberation Serif" font-size="14.40" fill="#2e2e2e" textLength="324.0" lengthAdjust="spacing">from day a new they while same then and down even</text><text x="-12.0" y="732.5" font-family="Liberation Serif" font-size="14.40" fill="#2e2e2e" textLength="185.1" lengthAdjust="spacing">about old if back work while</text><text x="-12.0" y="755.2" font-family="Liberation Serif" font-size="14.40" fill="#2e2e2e" textLength="324.0" lengthAdjust="spacing">many little may its own about them just only also</text><text x="-12.0" y="770.6" font-family="Liberation Serif" font-size="14.40" fill="#2e2e2e" textLength="324.0" lengthAdjust="spacing">one one while where as not now if they here being</text><text x="-12.0" y="786.0" font-family="Liberation Serif" font-size="14.40" fill="#2e2e2e" textLength="324.0" lengthAdjust="spacing">them good each year know after here did are for</text><text x="-12.0" y="835.2" font-family="Liberation Serif" font-size="12.80" fill="#303030" textLength="324.0" lengthAdjust="spacing">as such much made in one little get what is any could we</text><text x="-12.0" y="848.8" font-family="Liberation Serif" font-size="12.80" fill="#303030" textLength="324.0" lengthAdjust="spacing">you long an against down are its about under then out and</text><text x="-12.0" y="862.4" font-family="Liberation Serif" font-size="12.80" fill="#303030" textLength="324.0" lengthAdjust="spacing">since it out other my years go year last would people</text><text x="-12.0" y="876.0" font-family="Liberation Serif" font-size="12.80" fill="#303030" textLength="324.0" lengthAdjust="spacing">from good those there here get its of because right last</text><text x="-12.0" y="889.6" font-family="Liberation Serif" font-size="12.80" fill="#303030" textLength="157.3" lengthAdjust="spacing">into but her them these</text><text x="-12.0" y="903.2" font-family="Liberation Serif" font-size="12.80" fill="#303030" textLength="324.0" lengthAdjust="spacing">from made against did first in where might his it men</text><text x="-12.0" y="916.8" font-family="Liberation Serif" font-size="12.80" fill="#303030" textLength="168.5" lengthAdjust="spacing">now same that can not still</text><text x="344.0" y="227.2" font-family="Liberation Serif" font-size="14.40" fill="#2e2e2e" textLength="344.0" lengthAdjust="spacing">no since must all being has old old men know from only</text><text x="344.0" y="242.4" font-family="Liberation Serif" font-size="14.40" fill="#2e2e2e" textLength="344.0" lengthAdjust="spacing">off three over three more year great three then made</text><text x="344.0" y="257.6" font-family="Liberation Serif" font-size="14.40" fill="#2e2e2e" textLength="344.0" lengthAdjust="spacing">than even we came off my while about good against you</text><text x="344.0" y="272.8" font-family="Liberation Serif" font-size="14.40" fill="#2e2e2e" textLength="344.0" lengthAdjust="spacing">of because that against was old too came her another</text><text x="344.0" y="288.0" font-family="Liberation Serif" font-size="14.40" fill="#2e2e2e" textLength="198.3" lengthAdjust="spacing">not against both good little</text><text x="344.0" y="306.8" font-family="Liberation Serif" font-size="14.40" fill="#2e2e2e" textLength="344.0" lengthAdjust="spacing">two under know she through see under off also an up</text><text x="344.0" y="322.0" font-family="Liberation Serif" font-size="14.40" fill="#2e2e2e" textLength="344.0" lengthAdjust="spacing">that do there a it up been new to like did much these</text><text x="344.0" y="337.2" font-family="Liberation Serif" font-size="14.40" fill="#2e2e2e" textLength="344.0" lengthAdjust="spacing">have while her us may its come see a because good come</text><text x="344.0" y="352.4" font-family="Liberation Serif" font-size="14.40" fill="#2e2e2e" textLength="344.0" lengthAdjust="spacing">against into since can come can go one some years so</text><text x="344.0" y="367.6" font-family="Liberation Serif" font-size="14.40" fill="#2e2e2e" textLength="186.2" lengthAdjust="spacing">up can up which one time</text><text x="344.0" y="387.2" font-family="Liberation Serif" font-size="14.40" fill="#2e2e2e" textLength="344.0" lengthAdjust="spacing">from do those which see make came she about little in</text><text x="344.0" y="402.4" font-family="Liberation Serif" font-size="14.40" fill="#2e2e2e" textLength="344.0" lengthAdjust="spacing">about your way you might back last what this day an is</text><text x="344.0" y="417.6" font-family="Liberation Serif" font-size="14.40" fill="#2e2e2e" textLength="344.0" lengthAdjust="spacing">used great day their what said you into no would like</text><text x="344.0" y="432.8" font-family="Liberation Serif" font-size="14.40" fill="#2e2e2e" textLength="344.0" lengthAdjust="spacing">on one between are which many people life still great</text><text x="344.0" y="448.0" font-family="Liberation Serif" font-size="14.40" fill="#2e2e2e" textLength="344.0" lengthAdjust="spacing">own than should to as about so state get way down</text><text x="344.0" y="463.2" font-family="Liberation Serif" font-size="14.40" fill="#2e2e2e" textLength="344.0" lengthAdjust="spacing">up more which great to did his little what might back</text><text x="344.0" y="478.4" font-family="Liberation Serif" font-size="14.40" fill="#2e2e2e" textLength="344.0" lengthAdjust="spacing">such you would little one before against down own so</text><text x="344.0" y="493.6" font-family="Liberation Serif" font-size="14.40" fill="#2e2e2e" textLength="344.0" lengthAdjust="spacing">into said this back even being but and your with some</text><text x="344.0" y="508.8" font-family="Liberation Serif" font-size="14.40" fill="#2e2e2e" textLength="344.0" lengthAdjust="spacing">me through can little so since are those great while</text><text x="344.0" y="524.0" font-family="Liberation Serif" font-size="14.40" fill="#2e2e2e" textLength="199.7" lengthAdjust="spacing">how a you an could then work</text><text x="344.0" y="566.8" font-family="Liberation Serif" font-size="14.40" fill="#2e2e2e" textLength="344.0" lengthAdjust="spacing">might with its because and but do may now back right</text><text x="344.0" y="582.0" font-family="Liberation Serif" font-size="14.40" fill="#2e2e2e" textLength="344.0" lengthAdjust="spacing">us very year but work are right was just would just</text><text x="344.0" y="597.2" font-family="Liberation Serif" font-size="14.40" fill="#2e2e2e" textLength="344.0" lengthAdjust="spacing">if know go by still know make like off too made well</text><text x="344.0" y="612.4" font-family="Liberation Serif" font-size="14.40" fill="#2e2e2e" textLength="344.0" lengthAdjust="spacing">our day my three like man is to these as would state</text><text x="344.0" y="627.6" font-family="Liberation Serif" font-size="14.40" fill="#2e2e2e" textLength="344.0" lengthAdjust="spacing">be after how with also this other still never may</text><text x="344.0" y="642.8" font-family="Liberation Serif" font-size="14.40" fill="#2e2e2e" textLength="344.0" lengthAdjust="spacing">was year but life we these you with very get were into</text><text x="344.0" y="658.0" font-family="Liberation Serif" font-size="14.40" fill="#2e2e2e" textLength="344.0" lengthAdjust="spacing">your come been her well work all very get first make</text><text x="344.0" y="673.2" font-family="Liberation Serif" font-size="14.40" fill="#2e2e2e" textLength="344.0" lengthAdjust="spacing">come all over she time day you last made might your</text><text x="344.0" y="688.4" font-family="Liberation Serif" font-size="14.40" fill="#2e2e2e" textLength="344.0" lengthAdjust="spacing">my what such time what two last its as on and my do</text><text x="344.0" y="703.6" font-family="Liberation Serif" font-size="14.40" fill="#2e2e2e" textLength="344.0" lengthAdjust="spacing">is it have only go such this from will right could</text><text x="344.0" y="718.8" font-family="Liberation Serif" font-size="14.40" fill="#2e2e2e" textLength="169.8" lengthAdjust="spacing">much than through back</text><text x="344.0" y="753.6" font-family="Liberation Serif" font-size="14.40" fill="#2e2e2e" textLength="344.0" lengthAdjust="spacing">one are were long them work world do those has down</text><text x="344.0" y="768.8" font-family="Liberation Serif" font-size="14.40" fill="#2e2e2e" textLength="344.0" lengthAdjust="spacing">many over right said still down which between did or</text><text x="344.0" y="784.0" font-family="Liberation Serif" font-size="14.40" fill="#2e2e2e" textLength="344.0" lengthAdjust="spacing">his own same between me and are made them or even know</text><text x="344.0" y="799.2" font-family="Liberation Serif" font-size="14.40" fill="#2e2e2e" textLength="344.0" lengthAdjust="spacing">like we only your many well were did men such men come</text><text x="344.0" y="814.4" font-family="Liberation Serif" font-size="14.40" fill="#2e2e2e" textLength="344.0" lengthAdjust="spacing">both also only too old two his way well is well how</text><text x="344.0" y="829.6" font-family="Liberation Serif" font-size="14.40" fill="#2e2e2e" textLength="344.0" lengthAdjust="spacing">up down those go been out out from get like a only old</text><text x="344.0" y="844.8" font-family="Liberation Serif" font-size="14.40" fill="#2e2e2e" textLength="344.0" lengthAdjust="spacing">came would man a world not came most came his must or</text><text x="344.0" y="860.0" font-family="Liberation Serif" font-size="14.40" fill="#2e2e2e" textLength="204.6" lengthAdjust="spacing">after his is we which world</text><text x="344.0" y="882.4" font-family="Liberation Serif" font-size="14.40" fill="#2e2e2e" textLength="344.0" lengthAdjust="spacing">only another year through both people where through</text><text x="344.0" y="897.6" font-family="Liberation Serif" font-size="14.40" fill="#2e2e2e" textLength="344.0" lengthAdjust="spacing">one know same against this was good where the because</text><text x="344.0" y="912.8" font-family="Liberation Serif" font-size="14.40" fill="#2e2e2e" textLength="344.0" lengthAdjust="spacing">between go is off way and they make make their these</text><text x="344.0" y="928.0" font-family="Liberation Serif" font-size="14.40" fill="#2e2e2e" textLength="344.0" lengthAdjust="spacing">because more did into those world come over now on</text></g></svg></div><div class="cbody"><div class="ttl" style="margin-bottom:13px"><div id="t0_0" style="word-spacing:0.089px">Dunja Mladenić: Feature Selection using Linear Classifier Weights: Interaction with</div><div id="t0_1" style="word-spacing:-0.500px">Classification Models <span class="badge" style="background:#0576b7">Inbox</span></div></div><div class="cont"><div id="c0_0" style="word-spacing:0.057px">Feature Selection using Linear Classifier Weights: Interaction with Classification Models Janez Brank Jozef Stefan Institute</div><div id="c0_1" style="word-spacing:-0.425px">Ljubljana, Slovenia Tel.: +386 1 477 3900 Janez.Brank@ijs.si Dunja Mladenic Jozef Stefan Institute Ljubljana, Slovenia Tel.: +386</div><div id="c0_2" style="word-spacing:0.067px">1477 3900 Dunja.Mladenic@ijs.si ABSTRACT This paper explores feature scoring and selection based on weights from linear</div><div id="c0_3" style="word-spacing:0.971px">classification models. It investigates how these methods combine with various learning models. Our comparative analys</div></div><div class="foot"><div class="bg2"><div class="abs" style="left:57px;top:0;width:1px;height:29px;background:#6c757d"></div><svg class="abs" style="left:7px;top:7px;color:#6c757d" width="16" height="16" viewBox="0 0 16 16"><path fill="currentColor" fill-rule="evenodd" d="M11.293 1.293a1 1 0 0 1 1.414 0l2 2a1 1 0 0 1 0 1.414l-9 9a1 1 0 0 1-.39.242l-3 1a1 1 0 0 1-1.266-1.265l1-3a1 1 0 0 1 .242-.391l9-9zM12 2l2 2-9 9-3 1 1-3 9-9z"/><path fill="currentColor" fill-rule="evenodd" d="M12.146 6.354l-2.5-2.5.708-.708 2.5 2.5-.707.708zM3 10v.5a.5.5 0 0 0 .5.5H4v.5a.5.5 0 0 0 .5.5H5v.5a.5.5 0 0 0 .5.5H6v-1.5a.5.5 0 0 0-.5-.5H5v-.5a.5.5 0 0 0-.5-.5H3z"/></svg><div class="abs" style="left:26px;top:1px;line-height:29px">Edit</div><svg class="abs" style="left:66px;top:9px;color:#6c757d" width="14" height="14" viewBox="0 0 16 16"><path fill="currentColor" fill-rule="evenodd" d="M.5 9.9a.5.5 0 0 1 .5.5v2.5a1 1 0 0 0 1 1h12a1 1 0 0 0 1-1v-2.5a.5.5 0 0 1 1 0v2.5a2 2 0 0 1-2 2H2a2 2 0 0 1-2-2v-2.5a.5.5 0 0 1 .5-.5z"/><path fill="currentColor" fill-rule="evenodd" d="M7.646 11.854a.5.5 0 0 0 .708 0l3-3a.5.5 0 0 0-.708-.708L8 10.793V1.5a.5.5 0 0 0-1 0v9.293L4.354 8.146a.5.5 0 1 0-.708.708l3 3z"/></svg><div class="abs" style="left:85px;top:1px;line-height:29px">Download</div></div><div class="created">Created: Apr 4, 1981</div></div></div></div><div class="card" style="top:439px;height:232px"><div class="thumb"><svg width="168" height="230" viewBox="0 0 168 230" style="position:absolute;left:0;top:0"><g transform="scale(0.25)"><text x="0.0" y="10.4" font-family="Liberation Sans" font-size="11.20" font-weight="bold" fill="#333">WWW 2009 MADRID!</text><text x="672.0" y="10.4" font-family="Liberation Sans" font-size="11.20" text-anchor="end" fill="#333">Track: Data Mining / Session: Learning</text><text x="336.0" y="72.0" font-family="Liberation Sans" font-size="22.40" font-weight="bold" text-anchor="middle" fill="#222" textLength="608.0" lengthAdjust="spacingAndGlyphs">Large Scale Multi-Label Classification via MetaLabeler</text><text x="140.0" y="126.0" font-family="Liberation Sans" font-size="14.40" text-anchor="middle" fill="#2a2a2a">Lei Tang</text><text x="332.0" y="126.0" font-family="Liberation Sans" font-size="14.40" text-anchor="middle" fill="#2a2a2a">Suju Rajan</text><text x="528.0" y="126.0" font-family="Liberation Sans" font-size="14.40" text-anchor="middle" fill="#2a2a2a">Vijay K. Narayanan</text><text x="140.0" y="140.0" font-family="Liberation Sans" font-size="14.40" text-anchor="middle" fill="#2a2a2a">Arizona State University</text><text x="332.0" y="140.0" font-family="Liberation Sans" font-size="14.40" text-anchor="middle" fill="#2a2a2a">Yahoo! Inc.</text><text x="528.0" y="140.0" font-family="Liberation Sans" font-size="14.40" text-anchor="middle" fill="#2a2a2a">Yahoo! Inc.</text><text x="140.0" y="154.4" font-family="Liberation Sans" font-size="14.40" text-anchor="middle" fill="#2a2a2a">Tempe, AZ 85287</text><text x="332.0" y="154.4" font-family="Liberation Sans" font-size="14.40" text-anchor="middle" fill="#2a2a2a">Sunnyvale, CA 94089</text><text x="528.0" y="154.4" font-family="Liberation Sans" font-size="14.40" text-anchor="middle" fill="#2a2a2a">Sunnyvale, CA 94089</text><text x="140.0" y="169.6" font-family="Liberation Sans" font-size="14.40" text-anchor="middle" fill="#2a2a2a">L.Tang@asu.edu</text><text x="332.0" y="169.6" font-family="Liberation Sans" font-size="14.40" text-anchor="middle" fill="#2a2a2a">suju@yahoo-inc.com</text><text x="528.0" y="169.6" font-family="Liberation Sans" font-size="14.40" text-anchor="middle" fill="#2a2a2a">vnarayan@yahoo-inc.com</text><text x="0.0" y="243.2" font-family="Liberation Serif" font-size="15.60" font-weight="bold" fill="#222">ABSTRACT</text><text x="0.0" y="262.4" font-family="Liberation Serif" font-size="13.60" fill="#2e2e2e" textLength="320.0" lengthAdjust="spacing">all these is long said were years or some any with</text><text x="0.0" y="276.3" font-family="Liberation Serif" font-size="13.60" fill="#2e2e2e" textLength="320.0" lengthAdjust="spacing">out used own with a first made make what so they come</text><text x="0.0" y="290.2" font-family="Liberation Serif" font-size="13.60" fill="#2e2e2e" textLength="320.0" lengthAdjust="spacing">many must do said people made great we such my said</text><text x="0.0" y="304.0" font-family="Liberation Serif" font-size="13.60" fill="#2e2e2e" textLength="320.0" lengthAdjust="spacing">with back since for make may might like old state how</text><text x="0.0" y="317.9" font-family="Liberation Serif" font-size="13.60" fill="#2e2e2e" textLength="320.0" lengthAdjust="spacing">most should how is me three came off own come still</text><text x="0.0" y="331.8" font-family="Liberation Serif" font-size="13.60" fill="#2e2e2e" textLength="320.0" lengthAdjust="spacing">at work your but own little by its great time too of</text><text x="0.0" y="345.7" font-family="Liberation Serif" font-size="13.60" fill="#2e2e2e" textLength="320.0" lengthAdjust="spacing">both up if that came because where out before your</text><text x="0.0" y="359.6" font-family="Liberation Serif" font-size="13.60" fill="#2e2e2e" textLength="320.0" lengthAdjust="spacing">work it not against one about but be up good her</text><text x="0.0" y="373.4" font-family="Liberation Serif" font-size="13.60" fill="#2e2e2e" textLength="320.0" lengthAdjust="spacing">both was were while off one like under under not much</text><text x="0.0" y="387.3" font-family="Liberation Serif" font-size="13.60" fill="#2e2e2e" textLength="320.0" lengthAdjust="spacing">do were in said last where not back which if see any</text><text x="0.0" y="401.2" font-family="Liberation Serif" font-size="13.60" fill="#2e2e2e" textLength="320.0" lengthAdjust="spacing">as are what much were can since then same he so a now</text><text x="0.0" y="415.1" font-family="Liberation Serif" font-size="13.60" fill="#2e2e2e" textLength="320.0" lengthAdjust="spacing">being than little years were off so it could because</text><text x="0.0" y="429.0" font-family="Liberation Serif" font-size="13.60" fill="#2e2e2e" textLength="320.0" lengthAdjust="spacing">into into another each with make between may two some</text><text x="0.0" y="442.8" font-family="Liberation Serif" font-size="13.60" fill="#2e2e2e" textLength="320.0" lengthAdjust="spacing">any not would out also by that while would such as</text><text x="0.0" y="456.7" font-family="Liberation Serif" font-size="13.60" fill="#2e2e2e" textLength="320.0" lengthAdjust="spacing">that now of can here some work since own all much</text><text x="0.0" y="470.6" font-family="Liberation Serif" font-size="13.60" fill="#2e2e2e" textLength="129.2" lengthAdjust="spacing">and each an no used</text><text x="0.0" y="501.2" font-family="Liberation Serif" font-size="15.60" font-weight="bold" fill="#222">Categories and Subject Descriptors</text><text x="0.0" y="520.0" font-family="Liberation Serif" font-size="13.60" fill="#2e2e2e" textLength="320.0" lengthAdjust="spacing">such great first what do such off would where us know</text><text x="0.0" y="534.0" font-family="Liberation Serif" font-size="13.60" fill="#2e2e2e" textLength="320.0" lengthAdjust="spacing">one against what while little back are those off up</text><text x="0.0" y="548.0" font-family="Liberation Serif" font-size="13.60" fill="#2e2e2e" textLength="107.0" lengthAdjust="spacing">each through</text><text x="0.0" y="579.6" font-family="Liberation Serif" font-size="15.60" font-weight="bold" fill="#222">General Terms</text><text x="0.0" y="600.0" font-family="Liberation Serif" font-size="13.60" fill="#2e2e2e" textLength="103.0" lengthAdjust="spacing">off been its take</text><text x="0.0" y="630.4" font-family="Liberation Serif" font-size="15.60" font-weight="bold" fill="#222">Keywords</text><text x="0.0" y="650.4" font-family="Liberation Serif" font-size="13.60" fill="#2e2e2e" textLength="320.0" lengthAdjust="spacing">the off did a you might be not but he out then might</text><text x="0.0" y="664.4" font-family="Liberation Serif" font-size="13.60" fill="#2e2e2e" textLength="320.0" lengthAdjust="spacing">after good off right must did be some great did like</text><text x="0.0" y="696.0" font-family="Liberation Serif" font-size="16.00" font-weight="bold" fill="#222">1.   INTRODUCTION</text><text x="16.0" y="714.4" font-family="Liberation Serif" font-size="13.60" fill="#2e2e2e" textLength="304.0" lengthAdjust="spacing">time these by were after me is after they have</text><text x="0.0" y="728.2" font-family="Liberation Serif" font-size="13.60" fill="#2e2e2e" textLength="320.0" lengthAdjust="spacing">must no would never like very people much all little</text><text x="0.0" y="742.0" font-family="Liberation Serif" font-size="13.60" fill="#2e2e2e" textLength="320.0" lengthAdjust="spacing">could go new should as between such great go can at</text><text x="0.0" y="755.8" font-family="Liberation Serif" font-size="13.60" fill="#2e2e2e" textLength="320.0" lengthAdjust="spacing">time made take all work with then these been you</text><text x="0.0" y="769.6" font-family="Liberation Serif" font-size="13.60" fill="#2e2e2e" textLength="320.0" lengthAdjust="spacing">day many more might because he through into each</text><text x="0.0" y="783.4" font-family="Liberation Serif" font-size="13.60" fill="#2e2e2e" textLength="320.0" lengthAdjust="spacing">both see against with how both men way than our and</text><text x="0.0" y="797.2" font-family="Liberation Serif" font-size="13.60" fill="#2e2e2e" textLength="320.0" lengthAdjust="spacing">you been get or can being any she a will even against</text><text x="0.0" y="811.0" font-family="Liberation Serif" font-size="13.60" fill="#2e2e2e" textLength="320.0" lengthAdjust="spacing">its through how long take no little here take world</text><text x="0.0" y="824.8" font-family="Liberation Serif" font-size="13.60" fill="#2e2e2e" textLength="320.0" lengthAdjust="spacing">than these other come my over was time used time much</text><text x="0.0" y="838.6" font-family="Liberation Serif" font-size="13.60" fill="#2e2e2e" textLength="320.0" lengthAdjust="spacing">should her new where very should she all was right</text><text x="0.0" y="852.4" font-family="Liberation Serif" font-size="13.60" fill="#2e2e2e" textLength="135.4" lengthAdjust="spacing">an she us some how</text><text x="0.0" y="868.8" font-family="Liberation Serif" font-size="12.80" fill="#303030" textLength="320.0" lengthAdjust="spacing">have should might do to and more work must would day</text><text x="0.0" y="882.2" font-family="Liberation Serif" font-size="12.80" fill="#303030" textLength="320.0" lengthAdjust="spacing">us will but do down were under if no his last then work</text><text x="0.0" y="895.6" font-family="Liberation Serif" font-size="12.80" fill="#303030" textLength="153.7" lengthAdjust="spacing">did new so with her way he</text><text x="0.0" y="909.0" font-family="Liberation Serif" font-size="12.80" fill="#303030" textLength="201.8" lengthAdjust="spacing">go good must own which some state</text><text x="0.0" y="922.4" font-family="Liberation Serif" font-size="12.80" fill="#303030" textLength="101.4" lengthAdjust="spacing">back three my</text><text x="368.0" y="244.0" font-family="Liberation Serif" font-size="13.60" fill="#2e2e2e" textLength="304.0" lengthAdjust="spacing">many too us which that where against this would</text><text x="352.0" y="258.0" font-family="Liberation Serif" font-size="13.60" fill="#2e2e2e" textLength="320.0" lengthAdjust="spacing">to here just world this way that day those them our</text><text x="352.0" y="272.0" font-family="Liberation Serif" font-size="13.60" fill="#2e2e2e" textLength="320.0" lengthAdjust="spacing">three if like they as between about after little so</text><text x="352.0" y="286.0" font-family="Liberation Serif" font-size="13.60" fill="#2e2e2e" textLength="320.0" lengthAdjust="spacing">could more not in you up do make same such most your</text><text x="352.0" y="300.0" font-family="Liberation Serif" font-size="13.60" fill="#2e2e2e" textLength="320.0" lengthAdjust="spacing">down made or take being only we what world those has</text><text x="352.0" y="314.0" font-family="Liberation Serif" font-size="13.60" fill="#2e2e2e" textLength="320.0" lengthAdjust="spacing">such way and both off us never what is them has made</text><text x="352.0" y="328.0" font-family="Liberation Serif" font-size="13.60" fill="#2e2e2e" textLength="320.0" lengthAdjust="spacing">that know were right where only they new much very if</text><text x="352.0" y="342.0" font-family="Liberation Serif" font-size="13.60" fill="#2e2e2e" textLength="129.1" lengthAdjust="spacing">time day still you</text><text x="380.0" y="362.8" font-family="Liberation Serif" font-size="13.60" fill="#2e2e2e" textLength="292.0" lengthAdjust="spacing">one then one her man could much where now he</text><text x="380.0" y="376.8" font-family="Liberation Serif" font-size="13.60" fill="#2e2e2e" textLength="292.0" lengthAdjust="spacing">people take other about them one been also may</text><text x="380.0" y="390.8" font-family="Liberation Serif" font-size="13.60" fill="#2e2e2e" textLength="292.0" lengthAdjust="spacing">he new with same man they were make at the a</text><text x="380.0" y="404.8" font-family="Liberation Serif" font-size="13.60" fill="#2e2e2e" textLength="175.2" lengthAdjust="spacing">good old one great time no</text><text x="380.0" y="428.4" font-family="Liberation Serif" font-size="13.60" fill="#2e2e2e" textLength="292.0" lengthAdjust="spacing">first was also would his by go work could take</text><text x="380.0" y="442.4" font-family="Liberation Serif" font-size="13.60" fill="#2e2e2e" textLength="292.0" lengthAdjust="spacing">last well some she now did was might not is that</text><text x="380.0" y="456.4" font-family="Liberation Serif" font-size="13.60" fill="#2e2e2e" textLength="292.0" lengthAdjust="spacing">year because just have much make great last but</text><text x="380.0" y="470.4" font-family="Liberation Serif" font-size="13.60" fill="#2e2e2e" textLength="292.0" lengthAdjust="spacing">they while your those them two all which man by</text><text x="380.0" y="484.4" font-family="Liberation Serif" font-size="13.60" fill="#2e2e2e" textLength="125.6" lengthAdjust="spacing">any well her my</text><text x="368.0" y="504.8" font-family="Liberation Serif" font-size="13.60" fill="#2e2e2e" textLength="304.0" lengthAdjust="spacing">well my this such years after our good right no</text><text x="352.0" y="518.7" font-family="Liberation Serif" font-size="13.60" fill="#2e2e2e" textLength="320.0" lengthAdjust="spacing">know would could no could own from should life same</text><text x="352.0" y="532.6" font-family="Liberation Serif" font-size="13.60" fill="#2e2e2e" textLength="320.0" lengthAdjust="spacing">off here from much day they know me such we came men</text><text x="352.0" y="546.4" font-family="Liberation Serif" font-size="13.60" fill="#2e2e2e" textLength="320.0" lengthAdjust="spacing">even work how little make these under should while</text><text x="352.0" y="560.3" font-family="Liberation Serif" font-size="13.60" fill="#2e2e2e" textLength="320.0" lengthAdjust="spacing">day most an well in years it day such those and two</text><text x="352.0" y="574.2" font-family="Liberation Serif" font-size="13.60" fill="#2e2e2e" textLength="320.0" lengthAdjust="spacing">years life them with each so than your can be year</text><text x="352.0" y="588.1" font-family="Liberation Serif" font-size="13.60" fill="#2e2e2e" textLength="320.0" lengthAdjust="spacing">with way from is from make great there there us are</text><text x="352.0" y="602.0" font-family="Liberation Serif" font-size="13.60" fill="#2e2e2e" textLength="320.0" lengthAdjust="spacing">were go made it people must what at was his its</text><text x="352.0" y="615.8" font-family="Liberation Serif" font-size="13.60" fill="#2e2e2e" textLength="320.0" lengthAdjust="spacing">old no came last new which will like like said my</text><text x="352.0" y="629.7" font-family="Liberation Serif" font-size="13.60" fill="#2e2e2e" textLength="320.0" lengthAdjust="spacing">through with used state much each other man your too</text><text x="352.0" y="643.6" font-family="Liberation Serif" font-size="13.60" fill="#2e2e2e" textLength="320.0" lengthAdjust="spacing">two made new with man our are been there little where</text><text x="352.0" y="657.5" font-family="Liberation Serif" font-size="13.60" fill="#2e2e2e" textLength="177.3" lengthAdjust="spacing">me come great at under she</text><text x="352.0" y="671.4" font-family="Liberation Serif" font-size="13.60" fill="#2e2e2e" textLength="320.0" lengthAdjust="spacing">long them over for would last in they year three some</text><text x="352.0" y="685.2" font-family="Liberation Serif" font-size="13.60" fill="#2e2e2e" textLength="320.0" lengthAdjust="spacing">at a people most any make an will my men me three not</text><text x="352.0" y="699.1" font-family="Liberation Serif" font-size="13.60" fill="#2e2e2e" textLength="320.0" lengthAdjust="spacing">been then as because me too was but come while at</text><text x="352.0" y="713.0" font-family="Liberation Serif" font-size="13.60" fill="#2e2e2e" textLength="320.0" lengthAdjust="spacing">even year so one its than never was same very an</text><text x="352.0" y="726.9" font-family="Liberation Serif" font-size="13.60" fill="#2e2e2e" textLength="320.0" lengthAdjust="spacing">still if also last her other another too me against</text><text x="352.0" y="740.8" font-family="Liberation Serif" font-size="13.60" fill="#2e2e2e" textLength="320.0" lengthAdjust="spacing">two most since come some good more day were see how</text><text x="352.0" y="754.6" font-family="Liberation Serif" font-size="13.60" fill="#2e2e2e" textLength="320.0" lengthAdjust="spacing">know day that may good go have time from two many old</text><text x="352.0" y="768.5" font-family="Liberation Serif" font-size="13.60" fill="#2e2e2e" textLength="320.0" lengthAdjust="spacing">little has still since than back long on over great</text><text x="352.0" y="782.4" font-family="Liberation Serif" font-size="13.60" fill="#2e2e2e" textLength="320.0" lengthAdjust="spacing">never what before as more will was new because might</text><text x="352.0" y="796.3" font-family="Liberation Serif" font-size="13.60" fill="#2e2e2e" textLength="320.0" lengthAdjust="spacing">might or come at each do in see where never well</text><text x="352.0" y="810.2" font-family="Liberation Serif" font-size="13.60" fill="#2e2e2e" textLength="320.0" lengthAdjust="spacing">like was very might would out last then great come</text><text x="352.0" y="824.0" font-family="Liberation Serif" font-size="13.60" fill="#2e2e2e" textLength="320.0" lengthAdjust="spacing">way one work and her long those such know but what</text><text x="352.0" y="837.9" font-family="Liberation Serif" font-size="13.60" fill="#2e2e2e" textLength="320.0" lengthAdjust="spacing">while us into with there more would in first should a</text><text x="352.0" y="851.8" font-family="Liberation Serif" font-size="13.60" fill="#2e2e2e" textLength="320.0" lengthAdjust="spacing">is should were with these life into too not been then</text><text x="352.0" y="865.7" font-family="Liberation Serif" font-size="13.60" fill="#2e2e2e" textLength="320.0" lengthAdjust="spacing">over old the but come he could these too three he out</text><text x="352.0" y="879.6" font-family="Liberation Serif" font-size="13.60" fill="#2e2e2e" textLength="320.0" lengthAdjust="spacing">did under but since at since and a that while made</text><text x="352.0" y="893.4" font-family="Liberation Serif" font-size="13.60" fill="#2e2e2e" textLength="320.0" lengthAdjust="spacing">of one any be your in first over here between was for</text><text x="352.0" y="907.3" font-family="Liberation Serif" font-size="13.60" fill="#2e2e2e" textLength="98.7" lengthAdjust="spacing">same many where</text></g></svg></div><div class="cbody"><div class="ttl" style="margin-bottom:13px"><div id="t1_0" style="word-spacing:-1.025px">Lei Tang: Large Scale Multi-Label Classification via MetaLabeler <span class="badge" style="background:#0576b7">Inbox</span></div></div><div class="cont"><div id="c1_0" style="word-spacing:-0.037px">WWW 2009 MADRID! Track: Data Mining / Session: Learning Large Scale Multi-Label Classification via MetaLabeler Lei Tang</div><div id="c1_1" style="word-spacing:-0.200px">Arizona State University Tempe, AZ 85287 L.Tang@asu.edu ABSTRACT The explosion of online content has made the</div><div id="c1_2" style="word-spacing:1.200px">management of such content non-trivial. Web-related tasks such as web page categorization, news filtering, query categorization,</div><div id="c1_3" style="word-spacing:1.211px">tag rec- ommendation, etc. often involve the construction of multi- label categorization systems on a large scale. Existing multi-</div><div id="c1_4">labe</div></div><div class="foot"><div class="bg2"><div class="abs" style="left:57px;top:0;width:1px;height:29px;background:#6c757d"></div><svg class="abs" style="left:7px;top:7px;color:#6c757d" width="16" height="16" viewBox="0 0 16 16"><path fill="currentColor" fill-rule="evenodd" d="M11.293 1.293a1 1 0 0 1 1.414 0l2 2a1 1 0 0 1 0 1.414l-9 9a1 1 0 0 1-.39.242l-3 1a1 1 0 0 1-1.266-1.265l1-3a1 1 0 0 1 .242-.391l9-9zM12 2l2 2-9 9-3 1 1-3 9-9z"/><path fill="currentColor" fill-rule="evenodd" d="M12.146 6.354l-2.5-2.5.708-.708 2.5 2.5-.707.708zM3 10v.5a.5.5 0 0 0 .5.5H4v.5a.5.5 0 0 0 .5.5H5v.5a.5.5 0 0 0 .5.5H6v-1.5a.5.5 0 0 0-.5-.5H5v-.5a.5.5 0 0 0-.5-.5H3z"/></svg><div class="abs" style="left:26px;top:1px;line-height:29px">Edit</div><svg class="abs" style="left:66px;top:9px;color:#6c757d" width="14" height="14" viewBox="0 0 16 16"><path fill="currentColor" fill-rule="evenodd" d="M.5 9.9a.5.5 0 0 1 .5.5v2.5a1 1 0 0 0 1 1h12a1 1 0 0 0 1-1v-2.5a.5.5 0 0 1 1 0v2.5a2 2 0 0 1-2 2H2a2 2 0 0 1-2-2v-2.5a.5.5 0 0 1 .5-.5z"/><path fill="currentColor" fill-rule="evenodd" d="M7.646 11.854a.5.5 0 0 0 .708 0l3-3a.5.5 0 0 0-.708-.708L8 10.793V1.5a.5.5 0 0 0-1 0v9.293L4.354 8.146a.5.5 0 1 0-.708.708l3 3z"/></svg><div class="abs" style="left:85px;top:1px;line-height:29px">Download</div></div><div class="created">Created: Sep 4, 1987</div></div></div></div><div class="card" style="top:687px;height:235px"><div class="thumb"><svg width="168" height="235" viewBox="0 0 168 235" style="position:absolute;left:0;top:0"><g transform="scale(0.25)"><text x="336.0" y="20.0" font-family="Liberation Serif" font-size="24.80" font-weight="bold" text-anchor="middle" fill="#222" textLength="648.0" lengthAdjust="spacingAndGlyphs">An Automatic Tool for the Analysis of Natural Language</text><text x="336.0" y="56.0" font-family="Liberation Serif" font-size="24.80" font-weight="bold" text-anchor="middle" fill="#222" textLength="160.0" lengthAdjust="spacingAndGlyphs">Requirements</text><text x="336.0" y="110.4" font-family="Liberation Serif" font-size="13.60" text-anchor="middle" fill="#303030" textLength="568.0" lengthAdjust="spacingAndGlyphs">Giuseppe Lami, Stefania Gnesi, Fabrizio Fabbrini, Mario Fusani, Gianluca Trentanni</text><text x="336.0" y="135.6" font-family="Liberation Serif" font-size="13.60" font-style="italic" text-anchor="middle" fill="#303030" textLength="528.0" lengthAdjust="spacingAndGlyphs">C.N.R. – Information Science and Technology Institute “A. Faedo”, Pisa, Italy</text><text x="4.0" y="184.8" font-family="Liberation Serif" font-size="21.60" font-weight="bold" fill="#222">Abstract</text><text x="4.0" y="216.0" font-family="Liberation Serif" font-size="15.60" font-style="italic" fill="#303030" textLength="660.0" lengthAdjust="spacing">more some now never since come said last did come day work like this even good made old while be</text><text x="4.0" y="239.1" font-family="Liberation Serif" font-size="15.60" font-style="italic" fill="#303030" textLength="660.0" lengthAdjust="spacing">such also take these were by also like them not well her did these great my also of much off</text><text x="4.0" y="262.2" font-family="Liberation Serif" font-size="15.60" font-style="italic" fill="#303030" textLength="660.0" lengthAdjust="spacing">take people those said they for well three her not has at were also the by state now where about</text><text x="4.0" y="285.2" font-family="Liberation Serif" font-size="15.60" font-style="italic" fill="#303030" textLength="660.0" lengthAdjust="spacing">those both under your against get most same he and day each each way they these to go work after</text><text x="4.0" y="308.3" font-family="Liberation Serif" font-size="15.60" font-style="italic" fill="#303030" textLength="660.0" lengthAdjust="spacing">know day for from like between such world might state do being day those a how also many more an</text><text x="4.0" y="331.4" font-family="Liberation Serif" font-size="15.60" font-style="italic" fill="#303030" textLength="660.0" lengthAdjust="spacing">also our no much still see must down us for to new day at my or were its what its this not and</text><text x="4.0" y="354.5" font-family="Liberation Serif" font-size="15.60" font-style="italic" fill="#303030" textLength="660.0" lengthAdjust="spacing">come should of been good a from all get as a than take new they must well from while made that</text><text x="4.0" y="377.6" font-family="Liberation Serif" font-size="15.60" font-style="italic" fill="#303030" textLength="660.0" lengthAdjust="spacing">of while over before many off she must but through those know here my about his come about she</text><text x="4.0" y="400.6" font-family="Liberation Serif" font-size="15.60" font-style="italic" fill="#303030" textLength="660.0" lengthAdjust="spacing">but no very come there all day came between both did could of a is or has through said way may</text><text x="4.0" y="423.7" font-family="Liberation Serif" font-size="15.60" font-style="italic" fill="#303030" textLength="278.9" lengthAdjust="spacing">and know long just like any other as our</text><text x="4.0" y="473.2" font-family="Liberation Serif" font-size="21.60" font-weight="bold" fill="#222">1.</text><text x="64.0" y="473.2" font-family="Liberation Serif" font-size="21.60" font-weight="bold" fill="#222">Introduction</text><text x="4.0" y="530.4" font-family="Liberation Serif" font-size="15.60" fill="#303030" textLength="660.0" lengthAdjust="spacing">people is years his you what just before time each as could there old will just are while what</text><text x="4.0" y="553.5" font-family="Liberation Serif" font-size="15.60" fill="#303030" textLength="660.0" lengthAdjust="spacing">own like like just made see could because get work too but down men would such can for have will</text><text x="4.0" y="576.6" font-family="Liberation Serif" font-size="15.60" fill="#303030" textLength="660.0" lengthAdjust="spacing">just before never no world there could which one year very their last at how which come work</text><text x="4.0" y="599.6" font-family="Liberation Serif" font-size="15.60" fill="#303030" textLength="660.0" lengthAdjust="spacing">the which work know them might made so go came own like both could very may to even if day even</text><text x="4.0" y="622.7" font-family="Liberation Serif" font-size="15.60" fill="#303030" textLength="443.2" lengthAdjust="spacing">even up most here as these may see last well where were its that</text><text x="4.0" y="645.6" font-family="Liberation Serif" font-size="15.60" fill="#303030" textLength="660.0" lengthAdjust="spacing">also these right such before first where that over you so great into that our on very old also</text><text x="4.0" y="668.7" font-family="Liberation Serif" font-size="15.60" fill="#303030" textLength="660.0" lengthAdjust="spacing">an own us your then where these on to since right being from do long even or many own must out</text><text x="4.0" y="691.8" font-family="Liberation Serif" font-size="15.60" fill="#303030" textLength="660.0" lengthAdjust="spacing">their most there out life should where even man our many the made would not very against also so</text><text x="4.0" y="714.8" font-family="Liberation Serif" font-size="15.60" fill="#303030" textLength="660.0" lengthAdjust="spacing">know she good time more our more own since about another her and up would through right such</text><text x="4.0" y="737.9" font-family="Liberation Serif" font-size="15.60" fill="#303030" textLength="660.0" lengthAdjust="spacing">under years if now no his they three he that if we right too go her being about in take own each</text><text x="4.0" y="761.0" font-family="Liberation Serif" font-size="15.60" fill="#303030" textLength="660.0" lengthAdjust="spacing">came well a here from what has been while our did your than old their into all into they did</text><text x="4.0" y="784.1" font-family="Liberation Serif" font-size="15.60" fill="#303030" textLength="660.0" lengthAdjust="spacing">two one was but than other came how both know are way do because through year might the not</text><text x="4.0" y="807.2" font-family="Liberation Serif" font-size="15.60" fill="#303030" textLength="660.0" lengthAdjust="spacing">where been now its these an were well good all came on three which that still right people</text><text x="4.0" y="830.2" font-family="Liberation Serif" font-size="15.60" fill="#303030" textLength="660.0" lengthAdjust="spacing">then well because years only might you year must each if but a most right do is come no day</text><text x="4.0" y="853.3" font-family="Liberation Serif" font-size="15.60" fill="#303030" textLength="660.0" lengthAdjust="spacing">work how now know or its too off own each been down be no since back through because did even</text><text x="4.0" y="876.4" font-family="Liberation Serif" font-size="15.60" fill="#303030" textLength="660.0" lengthAdjust="spacing">made most way down into said made by how great only other off old his only go more old three us</text><text x="4.0" y="899.5" font-family="Liberation Serif" font-size="15.60" fill="#303030" textLength="660.0" lengthAdjust="spacing">man other will a people years little said still should of of long one way he way into no men</text><text x="4.0" y="922.6" font-family="Liberation Serif" font-size="15.60" fill="#303030" textLength="660.0" lengthAdjust="spacing">to in same must then all my three much there long own will by while a then there where not never</text></g></svg></div><div class="cbody"><div class="ttl" style="margin-bottom:12px"><div id="t2_0" style="word-spacing:0.655px">Giuseppe Lami: An Automatic Tool for the Analysis of Natural Language Requirements</div><div id="t2_1"><span class="badge" style="background:#e21b24;margin-left:4px;letter-spacing:-1px;padding-right:6.8px">TODO</span></div></div><div class="cont"><div id="c2_0" style="word-spacing:0.388px">An Automatic Tool for the Analysis of Natural Language Requirements Giuseppe Lami, Stefania Gnesi, Fabrizio Fabbrini, Mario</div><div id="c2_1" style="word-spacing:0.047px">Fusani, Gianluca Trentanni C.N.R. - Information Science and Technology Institute “A. Faedo”, Pisa, Italy Abstract The availability of</div><div id="c2_2" style="word-spacing:0.944px">automatic tools for the quality analysis of Natural Language requirements is recognized as a key factor for achieving software</div><div id="c2_3" style="word-spacing:1.078px">quality. Unfortunately, the state of the art and practice witnesses a lack of tools and techniques for the Natur</div></div><div class="foot"><div class="bg2"><div class="abs" style="left:57px;top:0;width:1px;height:29px;background:#6c757d"></div><svg class="abs" style="left:7px;top:7px;color:#6c757d" width="16" height="16" viewBox="0 0 16 16"><path fill="currentColor" fill-rule="evenodd" d="M11.293 1.293a1 1 0 0 1 1.414 0l2 2a1 1 0 0 1 0 1.414l-9 9a1 1 0 0 1-.39.242l-3 1a1 1 0 0 1-1.266-1.265l1-3a1 1 0 0 1 .242-.391l9-9zM12 2l2 2-9 9-3 1 1-3 9-9z"/><path fill="currentColor" fill-rule="evenodd" d="M12.146 6.354l-2.5-2.5.708-.708 2.5 2.5-.707.708zM3 10v.5a.5.5 0 0 0 .5.5H4v.5a.5.5 0 0 0 .5.5H5v.5a.5.5 0 0 0 .5.5H6v-1.5a.5.5 0 0 0-.5-.5H5v-.5a.5.5 0 0 0-.5-.5H3z"/></svg><div class="abs" style="left:26px;top:1px;line-height:29px">Edit</div><svg class="abs" style="left:66px;top:9px;color:#6c757d" width="14" height="14" viewBox="0 0 16 16"><path fill="currentColor" fill-rule="evenodd" d="M.5 9.9a.5.5 0 0 1 .5.5v2.5a1 1 0 0 0 1 1h12a1 1 0 0 0 1-1v-2.5a.5.5 0 0 1 1 0v2.5a2 2 0 0 1-2 2H2a2 2 0 0 1-2-2v-2.5a.5.5 0 0 1 .5-.5z"/><path fill="currentColor" fill-rule="evenodd" d="M7.646 11.854a.5.5 0 0 0 .708 0l3-3a.5.5 0 0 0-.708-.708L8 10.793V1.5a.5.5 0 0 0-1 0v9.293L4.354 8.146a.5.5 0 1 0-.708.708l3 3z"/></svg><div class="abs" style="left:85px;top:1px;line-height:29px">Download</div></div><div class="created">Created: Jan 1, 2000</div></div></div></div><div id="scroll"><div class="abs" style="left:2px;top:15px;width:11px;height:345px;background:#c1c1c1"></div><div class="abs" style="left:3px;top:5px;width:0;height:0;border-left:4.5px solid transparent;border-right:4.5px solid transparent;border-bottom:4.5px solid #a3a3a3;margin-left:0.5px;margin-top:1px"></div><div class="abs" style="left:3px;top:861px;width:0;height:0;border-left:4.5px solid transparent;border-right:4.5px solid transparent;border-top:4.5px solid #505050;margin-left:0.5px"></div></div></div></body></html>
